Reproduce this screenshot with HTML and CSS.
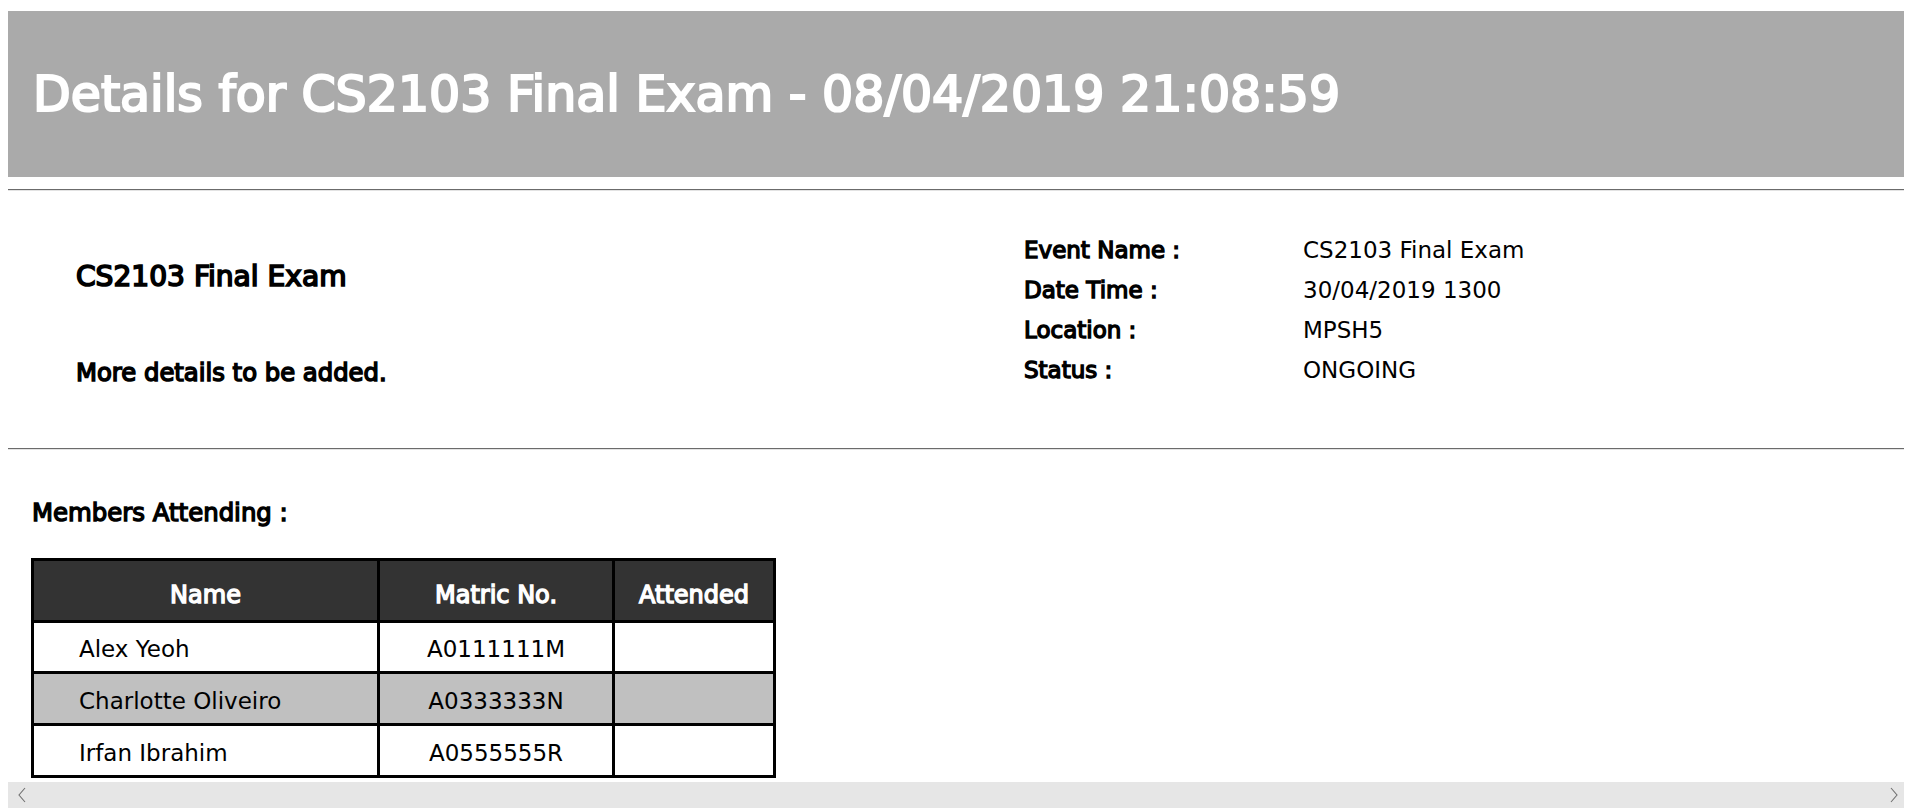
FILE: index.html
```html
<!DOCTYPE html>
<html>
<head>
<meta charset="utf-8">
<title>Event Details</title>
<link rel="stylesheet" href="styles.css">
</head>
<body>
<div class="window">
  <div class="viewport">
    <div class="banner">
      <h1 class="banner-title">Details for CS2103 Final Exam - 08/04/2019 21:08:59</h1>
    </div>
    <hr class="rule rule-top">
    <section class="info">
      <div class="info-main">
        <h2 class="event-title">CS2103 Final Exam</h2>
        <p class="event-desc">More details to be added.</p>
      </div>
      <dl class="info-list">
        <dt>Event Name :</dt><dd>CS2103 Final Exam</dd>
        <dt>Date Time :</dt><dd>30/04/2019 1300</dd>
        <dt>Location :</dt><dd>MPSH5</dd>
        <dt>Status :</dt><dd>ONGOING</dd>
      </dl>
    </section>
    <hr class="rule">
    <h3 class="members-label">Members Attending :</h3>
    <table class="members">
      <thead>
        <tr>
          <th class="col-name">Name</th>
          <th class="col-matric">Matric No.</th>
          <th class="col-attended">Attended</th>
        </tr>
      </thead>
      <tbody>
        <tr class="row-first"><td class="cell-name">Alex Yeoh</td><td class="cell-center">A0111111M</td><td class="cell-center"></td></tr>
        <tr class="row-alt"><td class="cell-name">Charlotte Oliveiro</td><td class="cell-center">A0333333N</td><td class="cell-center"></td></tr>
        <tr><td class="cell-name">Irfan Ibrahim</td><td class="cell-center">A0555555R</td><td class="cell-center"></td></tr>
      </tbody>
    </table>
  </div>
  <div class="hscroll">
    <svg class="chev" width="8" height="16" viewBox="0 0 8 16"><path d="M7 1 L1 8 L7 15" fill="none" stroke="#707070" stroke-width="1.1"/></svg>
    <svg class="chev" width="8" height="16" viewBox="0 0 8 16"><path d="M1 1 L7 8 L1 15" fill="none" stroke="#707070" stroke-width="1.1"/></svg>
  </div>
</div>
</body>
</html>
```
FILE: styles.css
```css
html, body {
  margin: 0;
  padding: 0;
  background: #ffffff;
}

body {
  font-family: "DejaVu Sans", "Liberation Sans", sans-serif;
  color: #000000;
}

.window {
  height: 812px;
  box-sizing: border-box;
  padding: 8px 10px 4px 8px;
  display: flex;
  flex-direction: column;
}

.viewport {
  flex: 1;
  min-height: 0;
  overflow: hidden;
  padding-top: 3px;
}

.banner {
  height: 166px;
  background: #aaaaaa;
  display: flex;
  align-items: center;
  padding-left: 25px;
}

.banner-title {
  margin: 0;
  font-weight: 400;
  font-size: 49px;
  line-height: 49px;
  color: #ffffff;
  -webkit-text-stroke: 2.2px #ffffff;
  white-space: nowrap;
}

.rule {
  margin: 0;
  height: 0;
  border: 0;
  border-top: 1px solid #6b6b6b;
  border-bottom: 1px solid #e3e3e3;
}

.rule-top {
  margin-top: 12px;
}

.info {
  display: flex;
  height: 257px;
}

.info-main {
  flex: 0 0 1016px;
  box-sizing: border-box;
  padding-left: 68px;
}

.event-title {
  margin: 69px 0 0;
  font-size: 28.1px;
  line-height: 34px;
  font-weight: 400;
  -webkit-text-stroke: 1.7px #000;
}

.event-desc {
  margin: 64px 0 0;
  font-size: 24.3px;
  line-height: 30px;
  font-weight: 400;
  -webkit-text-stroke: 1.5px #000;
}

.info-list {
  margin: 39px 0 0;
  display: grid;
  grid-template-columns: 279px auto;
  font-size: 23px;
  line-height: 40px;
  align-content: start;
}

.info-list dt {
  font-weight: 400;
  -webkit-text-stroke: 1.4px #000;
}

.info-list dd {
  margin: 0;
}

.members-label {
  margin: 48px 0 0 24px;
  font-size: 24.4px;
  line-height: 30px;
  font-weight: 400;
  -webkit-text-stroke: 1.4px #000;
}

.members {
  margin: 30px 0 0 23px;
  width: 745px;
  table-layout: fixed;
  border-collapse: separate;
  border-spacing: 0;
  border-top: 3px solid #000;
  border-left: 3px solid #000;
  font-size: 23px;
}

.members th,
.members td {
  box-sizing: border-box;
  border-right: 3px solid #000;
  border-bottom: 3px solid #000;
  padding: 0;
}

.members th {
  height: 62px;
  padding-top: 9px;
  background: #333333;
  color: #ffffff;
  font-size: 24px;
  font-weight: 400;
  -webkit-text-stroke: 1.4px #ffffff;
  text-align: center;
}

.col-name { width: 346px; }
.col-matric { width: 235px; }
.col-attended { width: 161px; }

.members td {
  height: 52px;
  padding-top: 4px;
  background: #ffffff;
}

.members .row-first td {
  height: 51px;
}

.members .row-alt td {
  background: #c0c0c0;
}

.members .cell-name {
  padding-left: 45px;
  text-align: left;
}

.cell-center {
  text-align: center;
}

.hscroll {
  height: 26px;
  flex: 0 0 26px;
  background: #e6e6e6;
  display: flex;
  align-items: center;
  justify-content: space-between;
  padding: 0 6px 0 10px;
}

.chev {
  display: block;
}
```
